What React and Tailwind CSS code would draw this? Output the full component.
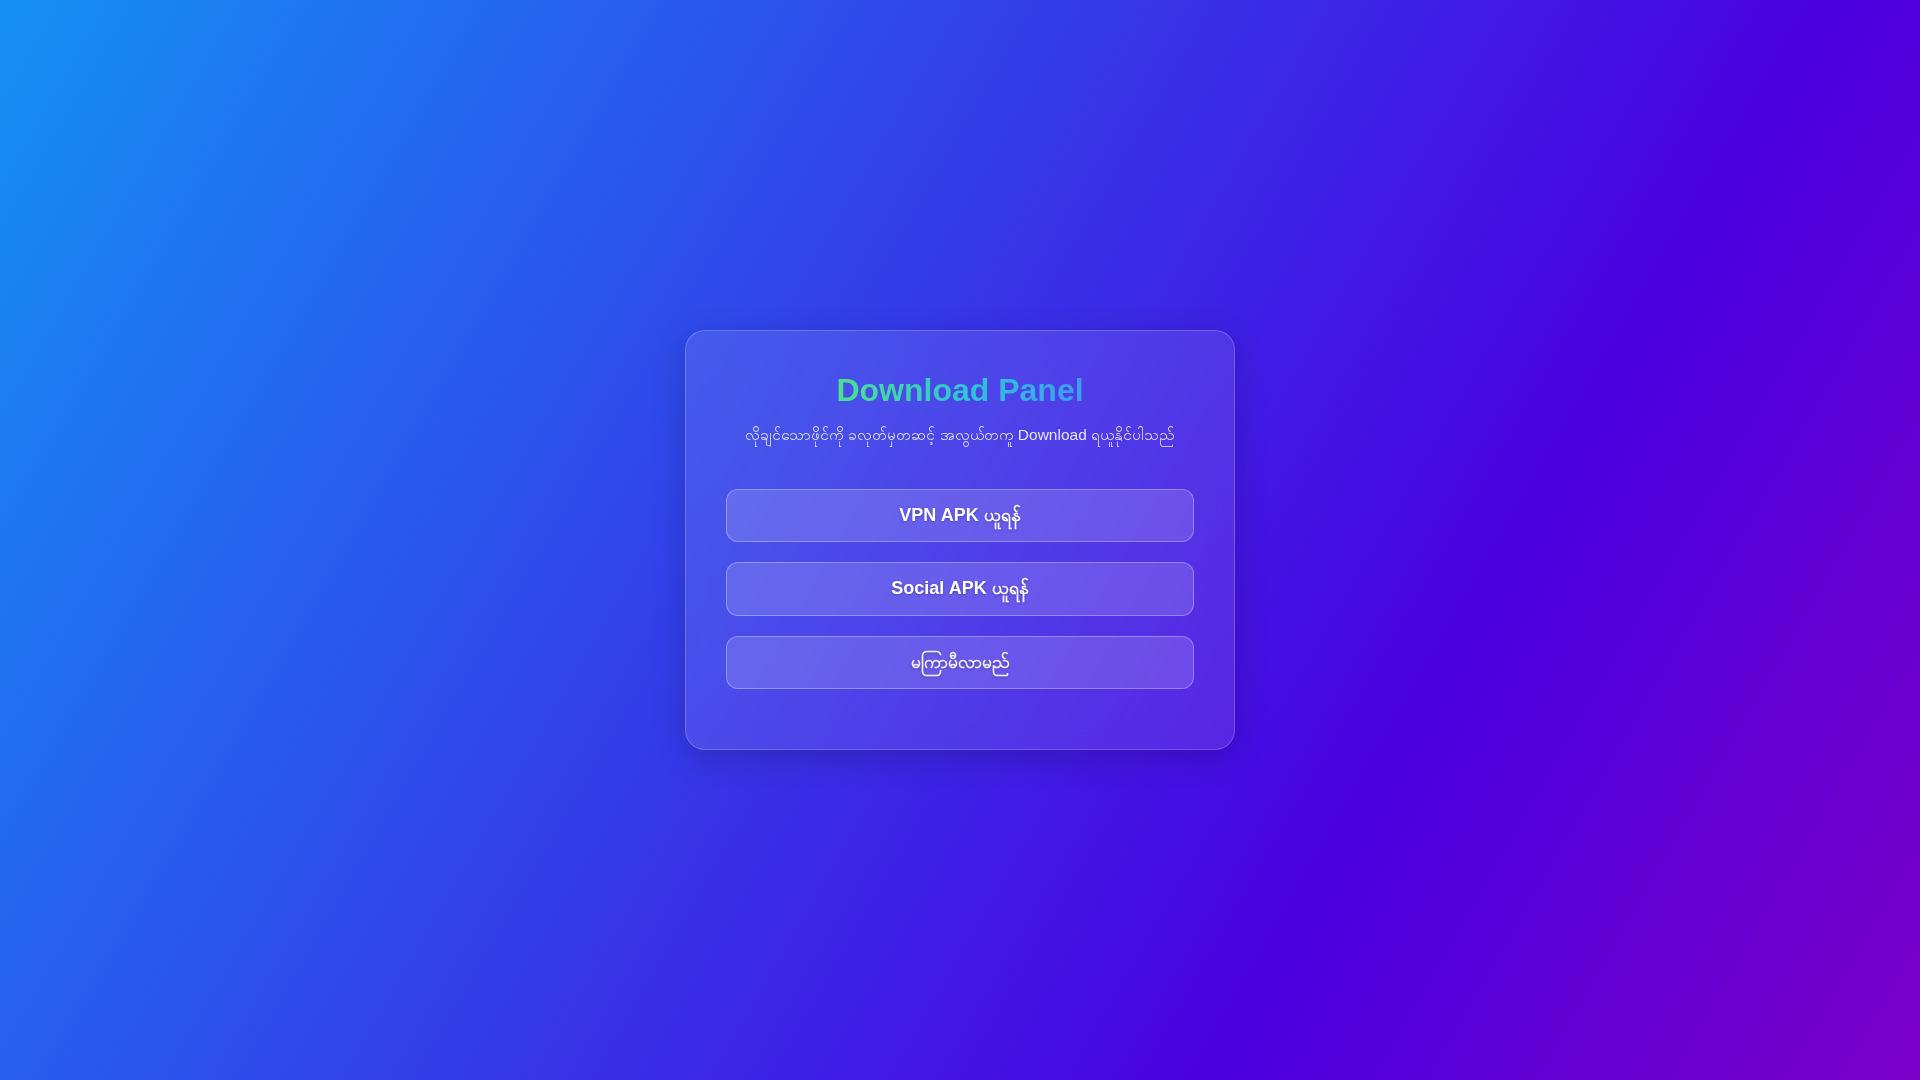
export default function App() {
  const font = { fontFamily: '"Liberation Sans", Arial, sans-serif' };
  return (
    <div
      className="min-h-screen w-full flex items-center justify-center bg-[linear-gradient(120deg,#1590f5_0%,#4a00e0_72%,#7c00c8_100%)]"
      style={font}
    >
      <div className="w-[550px] rounded-[20px] border border-white/20 bg-white/10 px-10 pt-10 pb-[60px] text-center shadow-[0_8px_32px_rgba(0,0,0,0.18)] backdrop-blur-md">
        <h1 className="mb-[17px] text-[32px] font-bold leading-[1.2]">
          <span className="bg-[linear-gradient(90deg,#4be38a,#2ec4d8_55%,#3b9cf2)] bg-clip-text text-transparent">
            Download Panel
          </span>
        </h1>
        <p className="mb-[44px] whitespace-nowrap text-[15.5px] leading-[1.2] text-white/85">
          လိုချင်သောဖိုင်ကို ခလုတ်မှတဆင့် အလွယ်တကူ Download ရယူနိုင်ပါသည်
        </p>
        <div className="flex flex-col gap-5">
          <button className="w-full rounded-xl border border-white/30 bg-white/15 py-[15px] text-[18px] font-bold leading-[1.2] text-white [text-shadow:0_1px_3px_rgba(0,0,0,0.25)]">
            VPN APK ယူရန်
          </button>
          <button className="w-full rounded-xl border border-white/30 bg-white/15 py-[15px] text-[18px] font-bold leading-[1.2] text-white [text-shadow:0_1px_3px_rgba(0,0,0,0.25)]">
            Social APK ယူရန်
          </button>
          <button className="w-full rounded-xl border border-white/30 bg-white/15 py-[15px] text-[18px] font-bold leading-[1.2] text-white/90 [text-shadow:0_1px_3px_rgba(0,0,0,0.25)]">
            မကြာမီလာမည်
          </button>
        </div>
      </div>
    </div>
  );
}
